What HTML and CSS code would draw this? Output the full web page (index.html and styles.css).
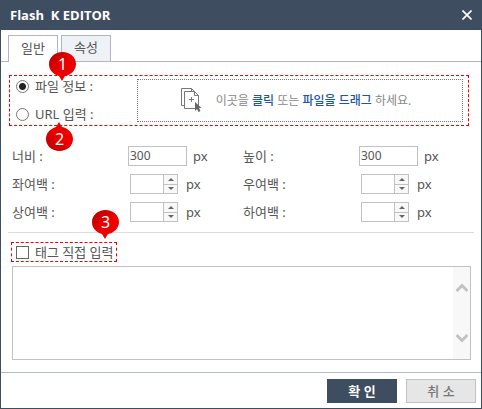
FILE: index.html
```html
<!DOCTYPE html>
<html lang="ko">
<head>
    <meta charset="UTF-8">
    <meta name="viewport" content="width=device-width, initial-scale=1.0">
    <title>Flash K EDITOR</title>
    <link rel="stylesheet" href="styles.css">
</head>
<body>
<form class="dialog">
    <header class="title-bar">
        <h1>Flash&nbsp; K EDITOR</h1>
        <button type="button" class="close-btn" aria-label="닫기">
            <svg width="10" height="10" viewBox="0 0 10 10"><path d="M0.5 0.5L9.5 9.5M9.5 0.5L0.5 9.5" stroke="#fff" stroke-width="1.7"/></svg>
        </button>
    </header>
    <nav class="tabs">
        <button type="button" class="tab active">일반</button>
        <button type="button" class="tab">속성</button>
    </nav>

    <section class="source">
        <div class="source-options">
            <label><input type="radio" name="source" checked>파일 정보 :</label>
            <label><input type="radio" name="source">URL 입력 :</label>
        </div>
        <div class="drop-zone">
            <svg class="drop-icon" width="21" height="25" viewBox="0 0 21 25">
                <path d="M4 17.5H0.5V0.5H10.5L13.5 3.5" fill="none" stroke="#777"/>
                <path d="M3.5 3.5H13.5L17.5 7.5V20.5H3.5Z" fill="#fff" stroke="#777"/>
                <path d="M10.5 0.5V3.5M13.5 3.5V7.5H17.5M10.5 9V14M8 11.5H13" fill="none" stroke="#777"/>
                <path d="M14 14V23L16 21L17.5 24L19.5 23L18 20H20.5Z" fill="#666"/>
            </svg>
            <p>이곳을 <b>클릭</b> 또는 <b>파일을 드래그</b> 하세요.</p>
        </div>
        <span class="marker marker-1"><svg width="27" height="29" viewBox="0 0 27 29"><use href="#pin"/></svg><i>1</i></span>
        <span class="marker marker-2"><svg class="flip" width="27" height="29" viewBox="0 0 27 29"><use href="#pin"/></svg><i>2</i></span>
    </section>

    <section class="sizes">
        <div class="field"><label for="width">너비 :</label><input id="width" class="size" type="text" value="300"><span>px</span></div>
        <div class="field"><label for="height">높이 :</label><input id="height" class="size" type="text" value="300"><span>px</span></div>
        <div class="field">
            <label for="left">좌여백 :</label>
            <div class="spin"><input id="left" type="text"><div class="spin-btns"><button type="button" class="up" aria-label="증가"></button><button type="button" class="down" aria-label="감소"></button></div></div>
            <span>px</span>
        </div>
        <div class="field">
            <label for="right">우여백 :</label>
            <div class="spin"><input id="right" type="text"><div class="spin-btns"><button type="button" class="up" aria-label="증가"></button><button type="button" class="down" aria-label="감소"></button></div></div>
            <span>px</span>
        </div>
        <div class="field">
            <label for="top">상여백 :</label>
            <div class="spin"><input id="top" type="text"><div class="spin-btns"><button type="button" class="up" aria-label="증가"></button><button type="button" class="down" aria-label="감소"></button></div></div>
            <span>px</span>
        </div>
        <div class="field">
            <label for="bottom">하여백 :</label>
            <div class="spin"><input id="bottom" type="text"><div class="spin-btns"><button type="button" class="up" aria-label="증가"></button><button type="button" class="down" aria-label="감소"></button></div></div>
            <span>px</span>
        </div>
    </section>

    <section class="tag-input">
        <label class="tag-check"><input type="checkbox">태그 직접 입력
            <span class="marker marker-3"><svg width="27" height="29" viewBox="0 0 27 29"><use href="#pin"/></svg><i>3</i></span>
        </label>
        <div class="editor">
            <textarea aria-label="태그 직접 입력"></textarea>
            <div class="scroll">
                <svg width="12" height="10" viewBox="0 0 12 10"><path d="M0.5 8L6 2.5L11.5 8" fill="none" stroke="#c1c1c1" stroke-width="3"/></svg>
                <svg width="12" height="10" viewBox="0 0 12 10"><path d="M0.5 2L6 7.5L11.5 2" fill="none" stroke="#c1c1c1" stroke-width="3"/></svg>
            </div>
        </div>
    </section>

    <footer class="actions">
        <button type="submit" class="ok">확 인</button>
        <button type="button" class="cancel">취 소</button>
    </footer>
</form>

<!-- shared marker shape -->
<svg class="defs" width="0" height="0">
    <defs>
        <linearGradient id="pin-red" x1="0" y1="0" x2="1" y2="1">
            <stop offset="0" stop-color="#b00000"/>
            <stop offset="0.5" stop-color="#ec0000"/>
            <stop offset="1" stop-color="#f00000"/>
        </linearGradient>
        <path id="pin" fill="url(#pin-red)" d="M13.5 0C21 0 27 5 27 12C27 18 22 23 16 24L13 29L10 24C4 22 0 18 0 12C0 5 6 0 13.5 0Z"/>
    </defs>
</svg>
</body>
</html>
```
FILE: styles.css
```css
* { box-sizing: border-box; }
body { margin: 0; font-family: "Noto Sans", "Noto Sans CJK KR", sans-serif; font-size: 13px; line-height: 20px; color: #555; }
button, input, textarea { font: inherit; color: inherit; margin: 0; padding: 0; border-radius: 0; }
.defs { position: absolute; }

.dialog { display: flex; flex-direction: column; min-height: 100vh; border: 1px solid #3f4d60; border-top: 0; background: #fff; }

.title-bar { display: flex; align-items: center; justify-content: space-between; height: 30px; padding: 0 9px; background: #3f4d60; color: #fff; }
.title-bar h1 { margin: 0; font-family: "Open Sans", "Noto Sans", sans-serif; font-size: 13px; font-weight: bold; }
.close-btn { display: flex; border: 0; background: none; }

.tabs { display: flex; gap: 3px; margin-top: 5px; padding-left: 7px; border-bottom: 1px solid #b0b4c5; }
.tab { width: 50px; height: 26px; padding-bottom: 3px; border: 1px solid #b0b4c5; border-bottom: 0; background: #eef1f5; font-size: 13px; }
.tab.active { height: 27px; margin-bottom: -1px; background: #fff; }

/* file / url */
.source { position: relative; display: flex; margin: 13px 12px 0 8px; padding: 3px 5px 3px 6px; border: 1px dashed #f00000; }
.source-options { display: flex; flex-direction: column; gap: 8px; width: 121px; margin: -3px 0; }
.source-options label { display: flex; align-items: center; gap: 6px; height: 20px; }
input[type="radio"] { appearance: none; width: 13px; height: 13px; border: 1px solid #777; border-radius: 50%; background: #fff; }
input[type="radio"]:checked { background: radial-gradient(circle, #222 3px, #fff 4px); }
.drop-zone { flex: 1; display: flex; align-items: center; justify-content: center; gap: 14px; height: 43px; padding-right: 8px; border: 1px dotted #777; font-size: 12px; color: #888; }
.drop-zone p { margin: 0; }
.drop-zone b { font-weight: 500; color: #1c57a5; }

/* numbered callouts */
.marker { position: absolute; width: 27px; height: 29px; color: #fff; }
.marker svg { display: block; }
.marker .flip { transform: scaleY(-1); }
.marker i { position: absolute; left: 0; top: 2px; width: 100%; text-align: center; font-style: normal; font-size: 16px; }
.marker-1 { left: 39px; top: -24px; }
.marker-2 { left: 36px; top: 46px; }
.marker-2 i { top: 7px; }
.marker-3 { left: 80px; top: -33px; }

/* sizes */
.sizes { display: grid; grid-template-columns: 1fr 1fr; row-gap: 8px; margin: 20px 7px 0; padding: 0 0 10px 4px; border-bottom: 1px solid #ddd; }
.field { display: flex; align-items: center; height: 20px; }
.field label { width: 116px; }
.size { width: 59px; height: 20px; padding-left: 1px; border: 1px solid #c1c1c1; font-size: 12px; }
.field span { margin-left: 6px; }
.spin { display: flex; width: 48px; height: 20px; margin-left: 2px; border: 1px solid #c1c1c1; }
.spin input { flex: 1; width: 0; border: 0; }
.spin-btns { display: flex; flex-direction: column; width: 14px; border-left: 1px solid #c1c1c1; }
.spin-btns button { flex: 1; display: flex; align-items: center; justify-content: center; border: 0; background: #f8f8f8; }
.spin-btns .down { border-top: 1px solid #c1c1c1; }
.up::before, .down::before { content: ""; border: 3px solid transparent; }
.up::before { border-top: 0; border-bottom-color: #666; }
.down::before { border-bottom: 0; border-top-color: #666; }
.spin + span { margin-left: 8px; }

/* tag */
.tag-input { display: flex; flex: 1; flex-direction: column; align-items: flex-start; padding: 9px 10px 12px; }
.tag-check { position: relative; display: flex; align-items: center; gap: 6px; height: 20px; padding: 0 2px 0 4px; border: 1px dashed #f00000; }
input[type="checkbox"] { appearance: none; width: 13px; height: 13px; border: 1px solid #666; background: #fff; }
.editor { flex: 1; display: flex; align-self: stretch; min-height: 94px; margin: 4px 0 0 1px; border: 1px solid #c1c1c1; }
.editor textarea { flex: 1; border: 0; resize: none; outline: 0; }
.scroll { display: flex; flex-direction: column; align-items: center; justify-content: space-between; width: 17px; padding: 16px 0; background: #f8f8f8; }

.actions { display: flex; justify-content: flex-end; gap: 9px; padding: 6px 5px 5px; border-top: 1px solid #b0b9c8; }
.actions button { width: 70px; height: 24px; border: 1px solid #c1c1c1; background: #e6e6e6; font-weight: 500; color: #777; }
.actions .ok { border-color: #3f4d60; background: #3f4d60; font-weight: bold; color: #fff; }
```
